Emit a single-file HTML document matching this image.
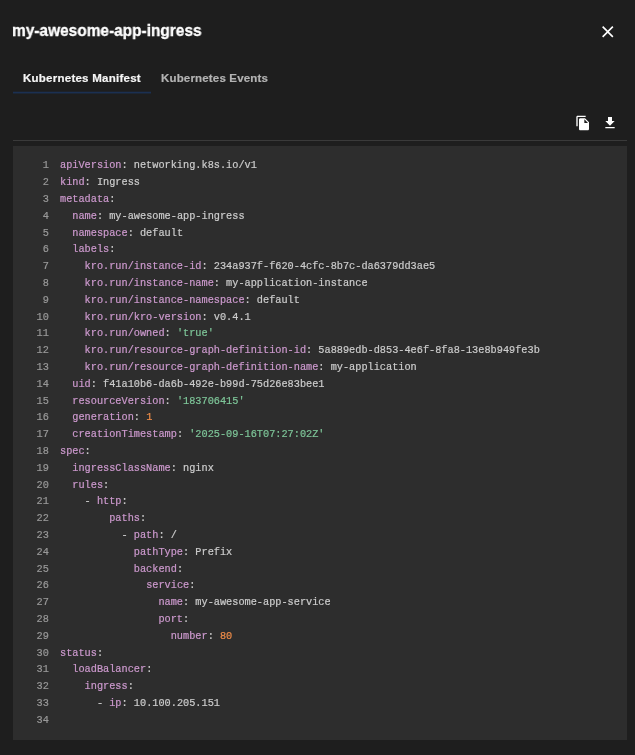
<!DOCTYPE html>
<html><head><meta charset="utf-8">
<style>
html,body{margin:0;padding:0}
body{-webkit-font-smoothing:antialiased;width:635px;height:755px;background:#1e1e1e;position:relative;overflow:hidden;font-family:"Liberation Sans",sans-serif}
.title{position:absolute;left:12.4px;top:21.2px;color:#fff;font-weight:bold;font-size:16.8px;-webkit-text-stroke:0.35px #fff;line-height:20px;white-space:nowrap;transform:scaleX(0.92);transform-origin:0 0;will-change:transform}
.close{position:absolute;left:597.9px;top:21.5px;width:19.5px;height:19.5px}
.tab{position:absolute;top:70.8px;will-change:transform;-webkit-text-stroke:0.2px currentColor;font-weight:bold;font-size:11.5px;letter-spacing:0.3px;line-height:14px;white-space:nowrap}
.t1{left:22.8px;color:#f5f5f5;letter-spacing:0.25px}
.t2{left:160.5px;color:#b3b3b3;letter-spacing:0.17px}
.ind{position:absolute;left:13px;top:92px;width:138px;height:1px;background:#1b3052;box-shadow:0 1px 0 rgba(27,48,82,0.45),0 -1px 0 rgba(27,48,82,0.25)}
.icon{position:absolute;top:115px;width:16px;height:16px}
.sep{position:absolute;left:13px;top:140px;width:614px;height:1px;background:#3a3a3a}
.code{position:absolute;left:13px;top:146px;width:614px;height:594px;background:#2d2d2d;box-sizing:border-box;padding:0}
.ln{position:absolute;left:0;height:17px;line-height:17px;font-family:"Liberation Mono",monospace;font-size:10.26px;color:#ccc;white-space:pre;-webkit-text-stroke:0.2px currentColor;will-change:transform}
.no{display:inline-block;width:36.4px;box-sizing:border-box;padding-left:11.2px;padding-right:11.2px;text-align:right;color:#999}
.no{width:47px}
.k{color:#cc99cd}
.s{color:#7ec699}
.n{color:#f08d49}
</style></head><body>
<div class="title">my-awesome-app-ingress</div>
<svg class="close" viewBox="0 0 24 24"><path fill="#fff" d="M19 6.41L17.59 5 12 10.59 6.41 5 5 6.41 10.59 12 5 17.59 6.41 19 12 13.41 17.59 19 19 17.59 13.41 12z"/></svg>
<div class="tab t1">Kubernetes Manifest</div>
<div class="tab t2">Kubernetes Events</div>
<div class="ind"></div>
<svg class="icon" style="left:575px" viewBox="0 0 24 24"><path fill="#fff" d="M16 1H4c-1.1 0-2 .9-2 2v14h2V3h12V1zm-1 4l6 6v10c0 1.1-.9 2-2 2H7.99C6.89 23 6 22.1 6 21l.01-14c0-1.1.89-2 1.99-2h7zm-1 7h5.5L14 6.5V12z"/></svg>
<svg class="icon" style="left:602px" viewBox="0 0 24 24"><path fill="#fff" d="M5 20h14v-2H5v2zM19 9h-4V3H9v6H5l7 7 7-7z"/></svg>
<div class="sep"></div>
<div class="code">
<div class="ln" style="top:11px"><span class="no">1</span><span class="k">apiVersion</span>: networking.k8s.io/v1</div>
<div class="ln" style="top:28px"><span class="no">2</span><span class="k">kind</span>: Ingress</div>
<div class="ln" style="top:45px"><span class="no">3</span><span class="k">metadata</span>:</div>
<div class="ln" style="top:62px"><span class="no">4</span>  <span class="k">name</span>: my-awesome-app-ingress</div>
<div class="ln" style="top:79px"><span class="no">5</span>  <span class="k">namespace</span>: default</div>
<div class="ln" style="top:95px"><span class="no">6</span>  <span class="k">labels</span>:</div>
<div class="ln" style="top:112px"><span class="no">7</span>    <span class="k">kro.run/instance-id</span>: 234a937f-f620-4cfc-8b7c-da6379dd3ae5</div>
<div class="ln" style="top:129px"><span class="no">8</span>    <span class="k">kro.run/instance-name</span>: my-application-instance</div>
<div class="ln" style="top:146px"><span class="no">9</span>    <span class="k">kro.run/instance-namespace</span>: default</div>
<div class="ln" style="top:163px"><span class="no">10</span>    <span class="k">kro.run/kro-version</span>: v0.4.1</div>
<div class="ln" style="top:179px"><span class="no">11</span>    <span class="k">kro.run/owned</span>: <span class="s">&#x27;true&#x27;</span></div>
<div class="ln" style="top:196px"><span class="no">12</span>    <span class="k">kro.run/resource-graph-definition-id</span>: 5a889edb-d853-4e6f-8fa8-13e8b949fe3b</div>
<div class="ln" style="top:213px"><span class="no">13</span>    <span class="k">kro.run/resource-graph-definition-name</span>: my-application</div>
<div class="ln" style="top:230px"><span class="no">14</span>  <span class="k">uid</span>: f41a10b6-da6b-492e-b99d-75d26e83bee1</div>
<div class="ln" style="top:247px"><span class="no">15</span>  <span class="k">resourceVersion</span>: <span class="s">&#x27;183706415&#x27;</span></div>
<div class="ln" style="top:263px"><span class="no">16</span>  <span class="k">generation</span>: <span class="n">1</span></div>
<div class="ln" style="top:280px"><span class="no">17</span>  <span class="k">creationTimestamp</span>: <span class="s">&#x27;2025-09-16T07:27:02Z&#x27;</span></div>
<div class="ln" style="top:297px"><span class="no">18</span><span class="k">spec</span>:</div>
<div class="ln" style="top:314px"><span class="no">19</span>  <span class="k">ingressClassName</span>: nginx</div>
<div class="ln" style="top:331px"><span class="no">20</span>  <span class="k">rules</span>:</div>
<div class="ln" style="top:347px"><span class="no">21</span>    - <span class="k">http</span>:</div>
<div class="ln" style="top:364px"><span class="no">22</span>        <span class="k">paths</span>:</div>
<div class="ln" style="top:381px"><span class="no">23</span>          - <span class="k">path</span>: /</div>
<div class="ln" style="top:398px"><span class="no">24</span>            <span class="k">pathType</span>: Prefix</div>
<div class="ln" style="top:415px"><span class="no">25</span>            <span class="k">backend</span>:</div>
<div class="ln" style="top:431px"><span class="no">26</span>              <span class="k">service</span>:</div>
<div class="ln" style="top:448px"><span class="no">27</span>                <span class="k">name</span>: my-awesome-app-service</div>
<div class="ln" style="top:465px"><span class="no">28</span>                <span class="k">port</span>:</div>
<div class="ln" style="top:482px"><span class="no">29</span>                  <span class="k">number</span>: <span class="n">80</span></div>
<div class="ln" style="top:499px"><span class="no">30</span><span class="k">status</span>:</div>
<div class="ln" style="top:515px"><span class="no">31</span>  <span class="k">loadBalancer</span>:</div>
<div class="ln" style="top:532px"><span class="no">32</span>    <span class="k">ingress</span>:</div>
<div class="ln" style="top:549px"><span class="no">33</span>      - <span class="k">ip</span>: 10.100.205.151</div>
<div class="ln" style="top:566px"><span class="no">34</span></div>
</div>
</body></html>
